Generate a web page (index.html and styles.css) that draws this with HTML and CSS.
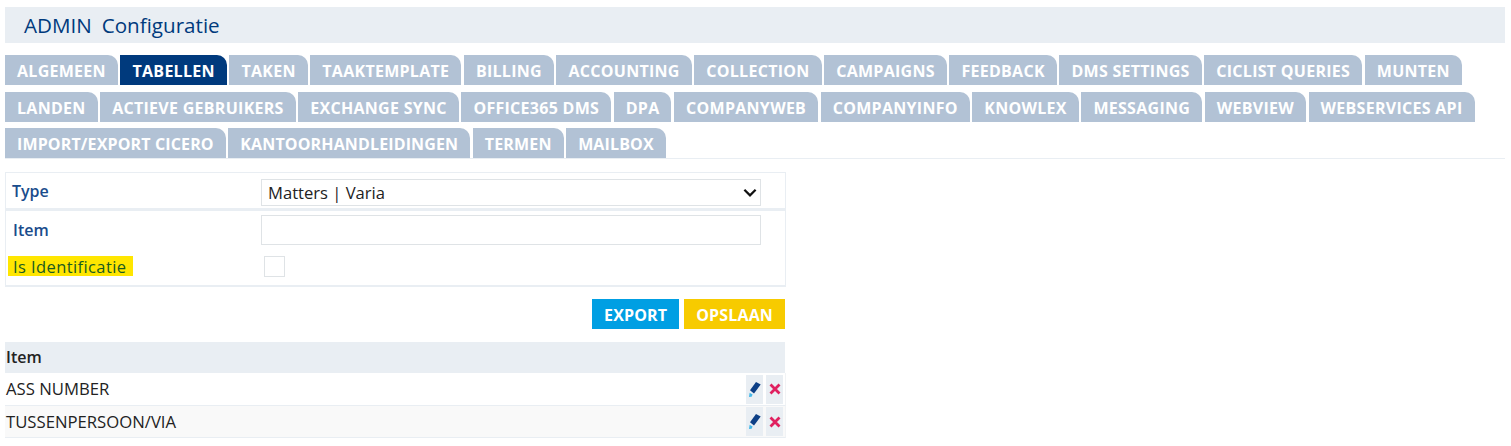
FILE: index.html
```html
<!DOCTYPE html>
<html lang="nl">
<head>
<meta charset="utf-8">
<title>ADMIN Configuratie</title>
<link rel="stylesheet" href="styles.css">
</head>
<body>
<h1 class="title"><span>ADMIN</span><span>Configuratie</span></h1>
<nav class="tabs">
<div class="tab-row"><a class="tab">ALGEMEEN</a><a class="tab active">TABELLEN</a><a class="tab">TAKEN</a><a class="tab">TAAKTEMPLATE</a><a class="tab">BILLING</a><a class="tab">ACCOUNTING</a><a class="tab">COLLECTION</a><a class="tab">CAMPAIGNS</a><a class="tab">FEEDBACK</a><a class="tab">DMS SETTINGS</a><a class="tab">CICLIST QUERIES</a><a class="tab">MUNTEN</a></div>
<div class="tab-row"><a class="tab">LANDEN</a><a class="tab">ACTIEVE GEBRUIKERS</a><a class="tab">EXCHANGE SYNC</a><a class="tab">OFFICE365 DMS</a><a class="tab">DPA</a><a class="tab">COMPANYWEB</a><a class="tab">COMPANYINFO</a><a class="tab">KNOWLEX</a><a class="tab">MESSAGING</a><a class="tab">WEBVIEW</a><a class="tab">WEBSERVICES API</a></div>
<div class="tab-row tight"><a class="tab">IMPORT/EXPORT CICERO</a><a class="tab">KANTOORHANDLEIDINGEN</a><a class="tab">TERMEN</a><a class="tab">MAILBOX</a></div>
</nav>
<main class="content">
<section class="panel type-panel">
<label class="label">Type</label>
<div class="select"><span>Matters | Varia</span>
<svg class="chevron" viewBox="0 0 12 8" width="14" height="9"><path d="M1 1.500l5 5 5-5" fill="none" stroke="#111" stroke-width="2"/></svg></div>
</section>
<section class="panel item-panel">
<div class="row"><label class="label">Item</label><div class="input"></div></div>
<div class="row check-row"><label class="label marked">Is Identificatie</label><div class="check"></div></div>
</section>
<div class="actions"><button class="btn export">EXPORT</button><button class="btn save">OPSLAAN</button></div>
<div class="table">
<div class="thead">Item</div>
<div class="trow"><span>ASS NUMBER</span><span class="icons"><span class="icon"><svg viewBox="0 0 12 15" width="12" height="15"><path d="M7 0l4.700 2.500L5 11.500 1 8.200z" fill="#0d3f86"/><path d="M.6 10.800l3 1.700-1 2.200L0 15z" fill="#45b8e8"/></svg></span><span class="icon"><svg viewBox="0 0 12 12" width="12" height="12"><path d="M1.500 1.500l9 9M10.500 1.500l-9 9" stroke="#e0205f" stroke-width="2.800"/></svg></span></span></div>
<div class="trow alt"><span>TUSSENPERSOON/VIA</span><span class="icons"><span class="icon"><svg viewBox="0 0 12 15" width="12" height="15"><path d="M7 0l4.700 2.500L5 11.500 1 8.200z" fill="#0d3f86"/><path d="M.6 10.800l3 1.700-1 2.200L0 15z" fill="#45b8e8"/></svg></span><span class="icon"><svg viewBox="0 0 12 12" width="12" height="12"><path d="M1.500 1.500l9 9M10.500 1.500l-9 9" stroke="#e0205f" stroke-width="2.800"/></svg></span></span></div>
</div>
</main>
</body>
</html>
```
FILE: styles.css
```css
* { box-sizing: border-box; }
html, body { margin: 0; background: #fff; }
body { padding: 7px 6px 0 5px; font-family: "Open Sans", sans-serif; height: 446px; overflow: hidden; }
.title { margin: 0; height: 36px; background: #e9eef3; padding-left: 19px; display: flex; gap: 10px; align-items: center; font-size: 20.600px; font-weight: 500; color: #003a7d; }
.tabs { display: flex; flex-direction: column; margin-top: 12px; gap: 6.500px; border-bottom: 1px solid #e9eef3; height: 104px; }
.tab-row { display: flex; gap: 2.600px; letter-spacing: .28px; }
.tab-row.tight { letter-spacing: .14px; }
.tab { height: 30px; padding: 0 12px; background: #b2c2d5; color: #fff; font-size: 16px; font-weight: 700; line-height: 32px; border-radius: 0 10px 0 0; white-space: nowrap; }
.tab.active { background: #003a7d; }
.content { width: 781px; margin-top: 13px; }
.panel { border: 1px solid #e9eef3; }
.type-panel { height: 39px; padding: 6px 24px 0 6px; display: flex; border-bottom-width: 3px; }
.label { display: block; width: 249px; flex: none; font-size: 16px; font-weight: 600; color: #1a4c8c; line-height: 24px; }
.select { width: 500px; height: 27px; border: 1px solid #dfe3e6; display: flex; align-items: center; justify-content: space-between; padding: 0 3px 0 6px; font-size: 16.600px; color: #222; }
.item-panel { border-top: 0; height: 76px; padding: 4px 24px 0 6px; border-bottom-width: 2px; }
.row { display: flex; }
.item-panel .label { padding: 3px 0 0 1px; }
.input { width: 500px; height: 30px; border: 1px solid #dfe3e6; }
.check-row { margin-top: 8px; align-items: center; }
.item-panel .marked { position: relative; color: #1a5a20; z-index: 0; font-weight: 500; font-size: 16.500px; letter-spacing: .4px; padding-top: 2px; }
.marked::before { content: ""; position: absolute; left: -4px; top: 3px; width: 125px; height: 20px; background: #ffe600; z-index: -1; }
.check { width: 21px; height: 21px; border: 1px solid #dfe3e6; margin-left: 3px; }
.actions { display: flex; justify-content: flex-end; gap: 5px; margin-top: 12px; padding-right: 1px; }
.btn { border: 0; height: 30px; padding: 1px 12px 0; color: #fff; font: 700 16px "Open Sans", sans-serif; letter-spacing: .15px; }
.export { background: #009fe3; }
.save { background: #f7cb00; }
.table { margin-top: 13px; width: 780px; }
.thead { height: 31px; background: #e9eef3; font-size: 16px; font-weight: 600; color: #222; line-height: 30px; padding-left: 1px; }
.trow { height: 33px; display: flex; justify-content: space-between; align-items: center; padding: 0 2px 0 1px; border-bottom: 1px solid #e9eef3; border-right: 1px solid #f1f3f5; font-size: 16.700px; color: #222; width: 781px; }
.trow > span:first-child { margin-top: -2px; }
.trow.alt { background: #f9f9f9; height: 32px; }
.trow.alt > span:first-child { margin-top: 0; }
.icons { display: flex; gap: 3px; }
.icon { width: 17px; height: 29px; background: #e9eef3; display: flex; align-items: center; justify-content: center; }
```
